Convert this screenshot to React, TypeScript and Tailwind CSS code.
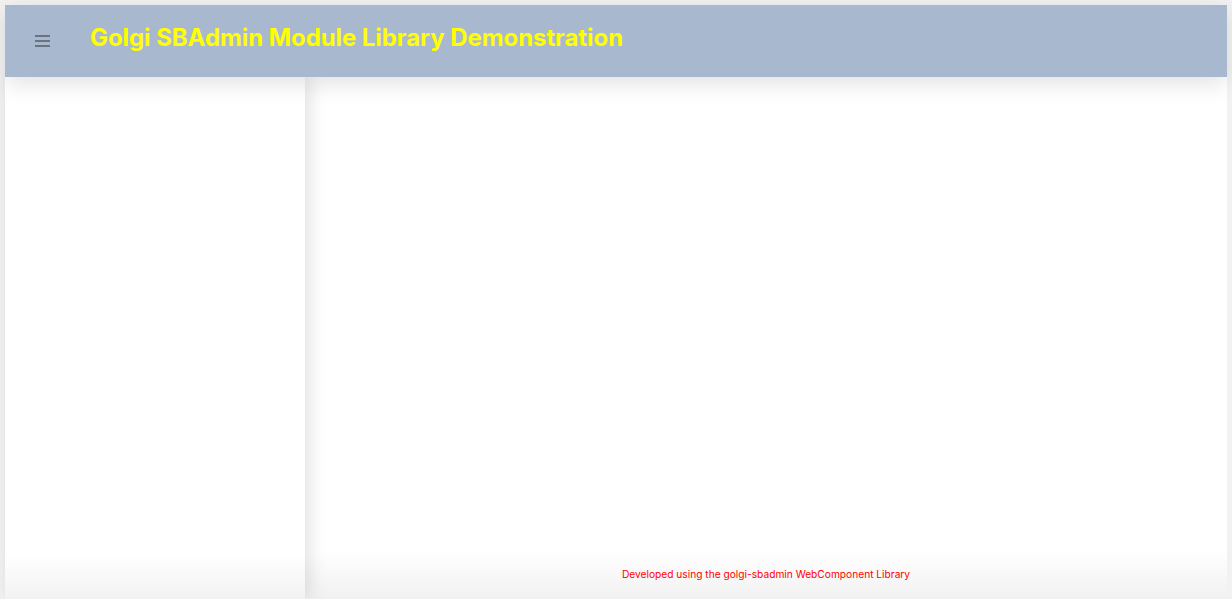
export default function App() {
  return (
    <div className="h-[599px] w-full overflow-hidden bg-[#f2f2f2] px-[5px] pt-[5px] font-['Inter',sans-serif]">
      <div className="flex h-full flex-col bg-white">
        {/* Top bar */}
        <header className="relative z-20 flex h-[72px] shrink-0 items-center bg-[#a8b8ce] shadow-[0_6px_22px_rgba(0,0,0,0.12)]">
          <button className="ml-[25px] flex h-[24px] w-[24px] flex-col items-center justify-center gap-[3.5px]">
            <span className="block h-[1.5px] w-[15px] bg-[#6b7280]" />
            <span className="block h-[1.5px] w-[15px] bg-[#6b7280]" />
            <span className="block h-[1.5px] w-[15px] bg-[#6b7280]" />
          </button>
          <h1 className="mb-[6px] ml-[36px] text-[24px] font-bold tracking-[-0.07px] text-[#ffff00]">
            Golgi SBAdmin Module Library Demonstration
          </h1>
        </header>

        <div className="flex min-h-0 flex-1">
          {/* Sidebar */}
          <aside className="relative z-10 flex w-[300px] shrink-0 flex-col bg-white shadow-[4px_0_18px_rgba(0,0,0,0.12)]">
            <div className="flex-1" />
            <div className="h-[44px] bg-gradient-to-b from-white to-[#f2f2f2]" />
          </aside>

          {/* Content */}
          <main className="flex flex-1 flex-col bg-white">
            <div className="flex-1" />
            <footer className="flex h-[48px] items-center justify-center bg-gradient-to-b from-white to-[#f1f1f1]">
              <span className="text-[10.2px] text-[#ff0000]">
                Developed using the golgi-sbadmin WebComponent Library
              </span>
            </footer>
          </main>
        </div>
      </div>
    </div>
  );
}
